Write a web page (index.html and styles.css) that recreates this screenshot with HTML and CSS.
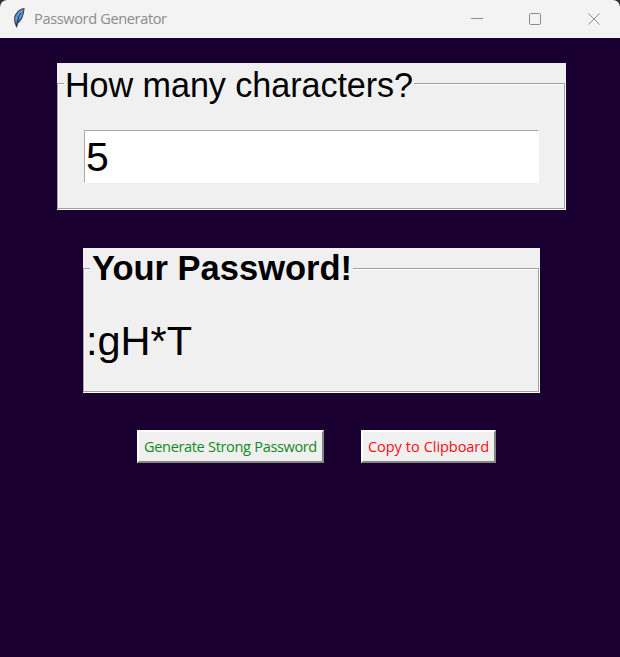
FILE: index.html
```html
<!DOCTYPE html>
<html lang="en">
<head>
<meta charset="utf-8">
<title>Password Generator</title>
<link rel="stylesheet" href="styles.css">
</head>
<body>
<div class="window">
  <header class="titlebar">
    <svg class="feather" width="14" height="22" viewBox="0 0 14 22">
      <path d="M12 1.500C7.500 2 3 6.500 2.500 11.500L3 15.500 4.500 19.500 5.500 16C9.500 14 11.800 7 12 1.500Z" fill="#4a8fd6" stroke="#4a4541" stroke-width="1.100"/>
      <path d="M9 6C7 9 5.500 13 4.600 19.500" fill="none" stroke="#20354f" stroke-width="1.200"/>
      <path d="M10 3.500 6 8M4.500 10l-.6 3M9.500 7l-2 4" fill="none" stroke="#7fb4ec" stroke-width="1"/>
    </svg>
    <h1 class="title">Password Generator</h1>
    <svg class="controls" width="130" height="14" viewBox="0 0 130 14" fill="none" stroke="#8c8c8c">
      <path d="M1 6.500h12"/>
      <rect x="59.500" y="1.500" width="11" height="11" rx="1"/>
      <path d="M118.300 1.300l11.400 11.400M129.700 1.300l-11.400 11.400"/>
    </svg>
  </header>
  <main class="content">
    <section class="panel ask">
      <div class="frame">
        <label class="legend" for="count">How many characters?</label>
        <input class="entry" id="count" value="5">
      </div>
    </section>
    <section class="panel result">
      <div class="frame">
        <h2 class="legend strong">Your Password!</h2>
        <output class="password">:gH*T</output>
      </div>
    </section>
    <div class="actions">
      <button class="btn generate">Generate Strong Password</button>
      <button class="btn copy">Copy to Clipboard</button>
    </div>
  </main>
</div>
</body>
</html>
```
FILE: styles.css
```css
* { box-sizing: border-box; }
body { margin: 0; background: #333; }
.window {
  height: 657px;
  background: #190030;
  border-radius: 7px 7px 0 0;
  overflow: hidden;
  font-family: "Liberation Sans", Arial, sans-serif;
  color: #000;
}
.titlebar {
  display: flex;
  align-items: center;
  height: 38px;
  padding: 0 20px 0 12px;
  background: #f3f3f3;
}
.feather { margin: -2px 8px 0 0; }
.title {
  flex: 1;
  margin: -2px 0 0;
  font: 400 14.6px/20px "Open Sans", "Noto Sans", sans-serif;
  letter-spacing: -0.38px;
  color: #8c8c8c;
}
.content {
  display: flex;
  flex-direction: column;
  padding: 25px 53px 0 57px;
}
.panel {
  padding: 20px 1px 1px 0;
  background: #f0f0f0;
}
.ask { height: 147px; width: 509px; }
.result { height: 145px; width: 457px; margin: 38px 0 0 26px; }
.frame {
  height: 100%;
  border: 1px solid #a0a0a0;
  box-shadow: 1px 1px 0 #fff, inset 1px 1px 0 #fff;
}
.legend {
  display: block;
  width: max-content;
  height: 40px;
  margin: -20px 0 0 6px;
  padding: 0 1px;
  background: #f0f0f0;
  font-size: 34.2px;
  font-weight: 400;
  line-height: 42px;
  letter-spacing: -0.08px;
}
.strong {
  padding-left: 2px;
  font-weight: 700;
  font-size: 34.5px;
  line-height: 39px;
  letter-spacing: 0;
}
.entry {
  display: block;
  width: 455px;
  height: 53px;
  margin: 26px 0 0 26px;
  padding: 2px 0 0 1px;
  border: 1px solid;
  border-color: #a8a8a8 #fff #fff #a8a8a8;
  border-radius: 0;
  background: #fff;
  font: 41px/48px "Liberation Sans", Arial, sans-serif;
  color: #000;
  outline: 0;
}
.password {
  display: block;
  margin: 28px 0 0 2px;
  font-size: 41.5px;
  line-height: 48px;
}
.actions {
  display: flex;
  gap: 37px;
  margin: 37px 0 0 80px;
}
.btn {
  height: 33px;
  padding: 0 0 2px;
  border: 2px solid;
  border-color: #fff #858585 #858585 #fff;
  border-radius: 0;
  background: #f0f0f0;
  font: 14.6px/26px "Open Sans", "Noto Sans", sans-serif;
  letter-spacing: -0.4px;
  word-spacing: 0.4px;
  white-space: nowrap;
}
.generate { width: 187px; color: #128a1c; }
.copy { width: 135px; color: #ff0a14; letter-spacing: -0.1px; }
```
